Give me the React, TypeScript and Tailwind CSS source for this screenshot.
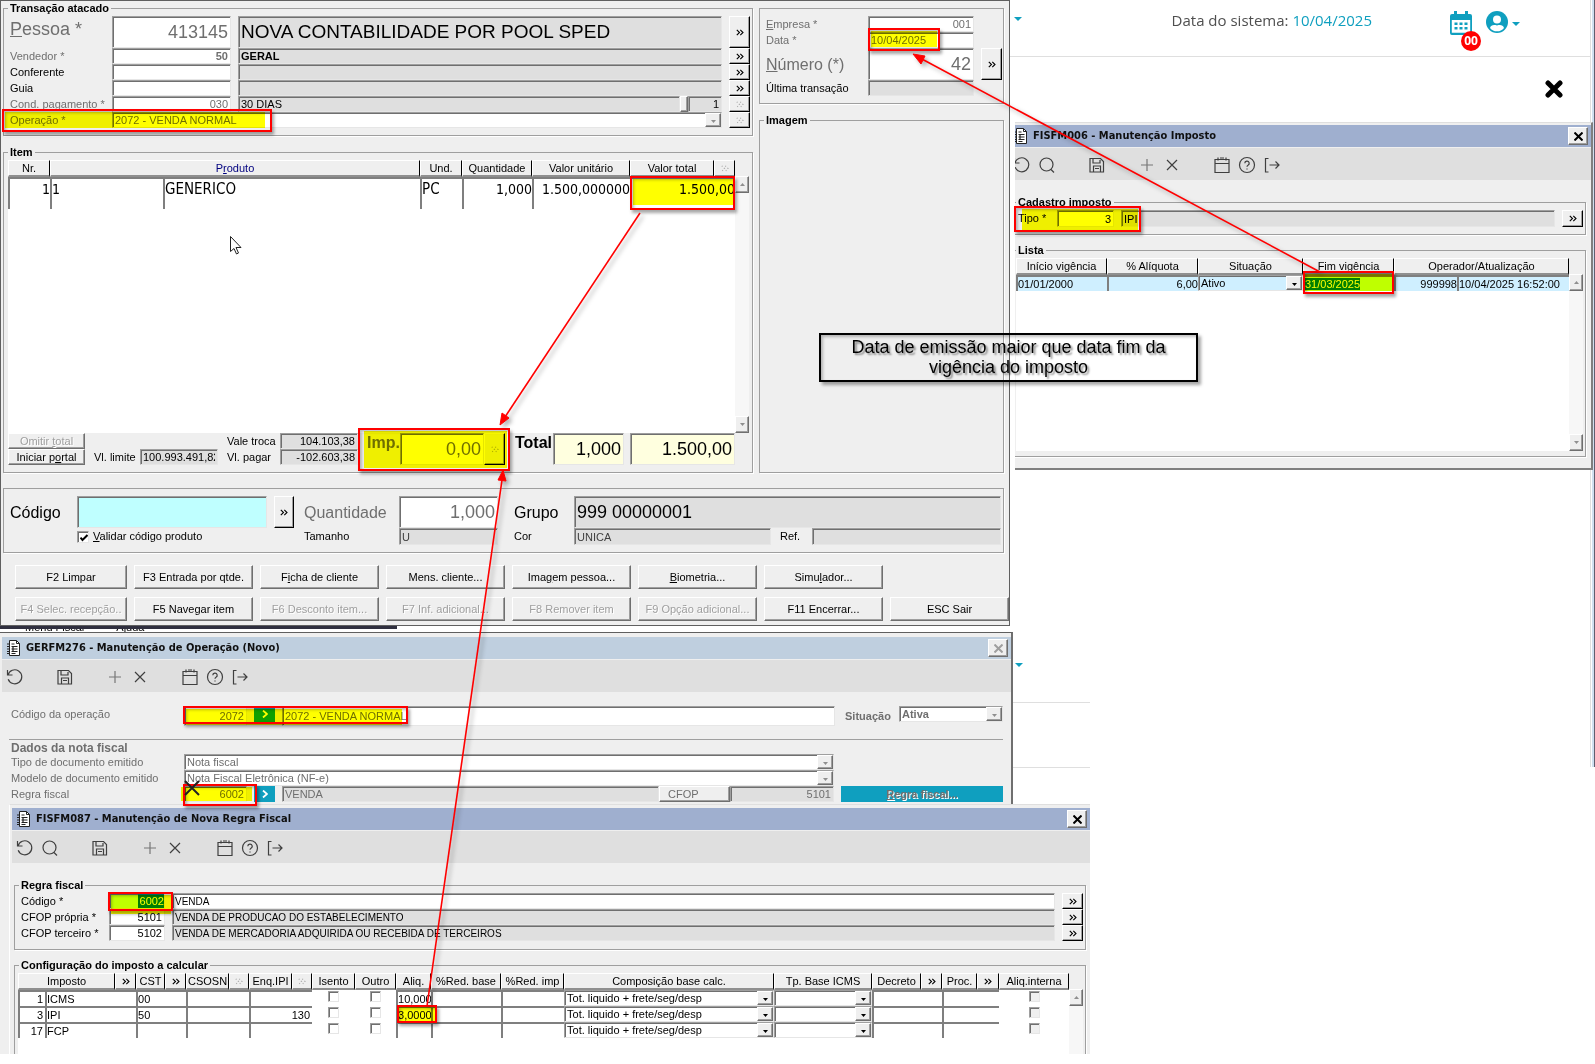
import { ReactNode } from "react";
import { clsx } from "clsx";

// Shared bevel styles
const raised = "bg-[#efefef] border-t border-l border-t-white border-l-white border-r border-b border-r-[#6f6f6f] border-b-[#6f6f6f] shadow-[inset_-1px_-1px_0_#9f9f9f]";
const raisedDark = "bg-[#efefef] border-t border-l border-t-white border-l-white border-r border-b border-r-black border-b-black shadow-[inset_-1px_-1px_0_#9f9f9f]";
const sunken = "border-t border-l border-t-[#9f9f9f] border-l-[#9f9f9f] border-r border-b border-r-[#e6e6e6] border-b-[#e6e6e6] shadow-[inset_1px_1px_0_#6f6f6f]";
const head = "h-4 p-0 pt-px text-center font-normal leading-[13px] whitespace-nowrap bg-[#efefef] border-t border-l border-t-white border-l-white border-r border-b-2 border-r-black border-b-[#8f8f8f]";
const cell = "p-0 border-t-2 border-l-2 border-[#7f7f7f] leading-3 whitespace-nowrap overflow-hidden";
const tahoma = "font-['DejaVu_Sans_Condensed','DejaVu_Sans',sans-serif]";

type FieldProps = { id?: string; label?: string; value?: string; className?: string };

const Field = ({ id, label, value = "", className }: FieldProps) => (
  <input
    id={id}
    aria-label={label}
    readOnly
    defaultValue={value}
    className={clsx("block h-full w-full min-w-0 px-0.5 outline-none", sunken, className)}
  />
);

const Chevrons = ({ off = false }) => (
  <svg viewBox="0 0 8 7" className="h-[7px] w-2" fill="none" stroke={off ? "#a8a8a8" : "#000"} strokeWidth="1.100" strokeDasharray={off ? "1 2" : undefined}>
    <path d="M.8.8l2.700 2.700L.8 6.200M4.300.8L7 3.500 4.300 6.200" />
  </svg>
);

const LookupButton = ({ off = false, label = "Pesquisar" }) => (
  <button type="button" aria-label={label} disabled={off} className={clsx("flex h-full w-full items-center justify-center", raisedDark)}>
    <Chevrons off={off} />
  </button>
);

const Combo = ({ id, label, value, off = false, className }: FieldProps & { off?: boolean }) => (
  <div className={clsx("flex h-4 min-w-0 items-center", sunken, className ?? "bg-white")}>
    <select id={id} aria-label={label} className="h-full min-w-0 flex-1 appearance-none bg-transparent pl-0.5 leading-3 outline-none">
      <option>{value}</option>
    </select>
    <span className={clsx("flex h-3.5 w-4 shrink-0 items-center justify-center", raised)}>
      <svg viewBox="0 0 5 3" className="mt-0.5 h-[3px] w-[5px]" fill={off ? "#8f8f8f" : "#000"}><path d="M0 0h5L2.5 3z" /></svg>
    </span>
  </div>
);

type GroupProps = { title: string; className?: string; inner?: string; children?: ReactNode };

const Group = ({ title, className, inner, children }: GroupProps) => (
  <fieldset className={clsx("m-0 min-w-0 border border-[#9f9f9f] p-0 shadow-[1px_1px_0_#fff]", className)}>
    <legend className="ml-1 h-4 px-0.5 leading-4 font-bold">{title}</legend>
    <div className={inner}>{children}</div>
  </fieldset>
);

const ScrollBar = ({ down = true }) => (
  <div className="flex w-3.5 shrink-0 flex-col justify-between bg-[#f7f7f7]">
    <span className={clsx("flex h-[17px] items-center justify-center", raised)}>
      <svg viewBox="0 0 5 3" className="h-[3px] w-[5px]" fill="#8f8f8f"><path d="M0 3h5L2.5 0z" /></svg>
    </span>
    {down && (
      <span className={clsx("flex h-[17px] items-center justify-center", raised)}>
        <svg viewBox="0 0 5 3" className="h-[3px] w-[5px]" fill="#8f8f8f"><path d="M0 0h5L2.5 3z" /></svg>
      </span>
    )}
  </div>
);

const DocIcon = () => (
  <svg viewBox="0 0 13 16" className="h-4 w-[13px] shrink-0" fill="none" stroke="#222">
    <path fill="#fff" d="M2.5.5h7l3 3v12h-10z" />
    <path d="M9.500.5v3h3M4.500 4h3M4.500 6.500h6M4.500 9h6M4.500 11.500h6M4.500 13.500h4" strokeWidth="1" />
    <path d="M0 4h2M0 6.500h2M0 9h2M0 11.500h2M0 13.500h2M6 6v6" strokeWidth="1.200" />
  </svg>
);

const toolIcons: Record<string, { label: string; light?: boolean; d: string }> = {
  undo: { label: "Desfazer", d: "M1.500 2v5h5M2 7a7 7 0 1 1 .2 4.200" },
  search: { label: "Pesquisar", d: "M15 8.500a6.500 6.500 0 1 1-13 0a6.500 6.500 0 1 1 13 0M13 13.500l3 3" },
  save: { label: "Salvar", d: "M2 2.500h10.500l3 3v10.500h-13.500zM5 2.500v4.500h7v-3M5.500 16v-6h7v6M7 12.500h4" },
  add: { label: "Incluir", light: true, d: "M9 3v12M3 9h12" },
  remove: { label: "Excluir", d: "M4 4l10 10M14 4l-10 10" },
  calendar: { label: "Calendário", d: "M2 3.500h14v13h-14zM2 7.500h14M5 1.500v3M13 1.500v3M7 2h4" },
  help: { label: "Ajuda", d: "M16.500 9a7.500 7.500 0 1 1-15 0a7.500 7.500 0 1 1 15 0M6.800 7.200a2.200 2.200 0 1 1 3.200 2c-.7.400-1 .8-1 1.600M9 12.500v1" },
  exit: { label: "Sair", d: "M5.500 2.500h-3v13.500h3M6.500 9h9.500M12.500 5.500l3.500 3.500-3.500 3.500" },
};

const Toolbar = ({ names, className }: { names: string[]; className?: string }) => (
  <div className={clsx("flex h-8 shrink-0 items-center bg-[#dfdfdf] pt-0.5", className)}>
    {names.map((name, i) => {
      const icon = toolIcons[name];
      if (!icon) return <span key={i} className="w-[25px]" />;
      return (
        <button key={i} type="button" aria-label={icon.label} className="flex w-[25px] justify-center">
          <svg viewBox="0 0 18 18" className="size-[18px]" fill="none" stroke={icon.light ? "#777" : "#3f3f3f"} strokeWidth="1.200">
            <path d={icon.d} />
          </svg>
        </button>
      );
    })}
  </div>
);

const TitleBar = ({ title, off = false, className }: { title: string; off?: boolean; className?: string }) => (
  <div className={clsx("mb-px flex h-[22px] shrink-0 items-center gap-1.5 pr-[3px]", className)}>
    <DocIcon />
    <h2 className={clsx("flex-1 text-[11px] font-bold text-[#101010]", tahoma)}>{title}</h2>
    <button type="button" aria-label="Fechar" className={clsx("flex h-[18px] w-5 items-center justify-center", raised)}>
      <svg viewBox="0 0 9 9" className="size-[9px]" stroke={off ? "#9f9f9f" : "#000"} strokeWidth="2"><path d="M.5.5l8 8M8.500.5l-8 8" /></svg>
    </button>
  </div>
);

/* ---------- Transação atacado ---------- */

const rowGrid = "grid h-4 grid-cols-[95px_119px_1fr_21px] gap-x-[7px]";

const people = [
  { id: "vendedor", label: "Vendedor *", code: "50", name: "GERAL", dim: true },
  { id: "conferente", label: "Conferente", code: "", name: "", dim: false },
  { id: "guia", label: "Guia", code: "", name: "", dim: false },
];

// "_" marks the accelerator letter that follows it
const Accel = ({ text }: { text: string }) => {
  const at = text.indexOf("_");
  if (at < 0) return <>{text}</>;
  return <>{text.slice(0, at)}<u>{text[at + 1]}</u>{text.slice(at + 2)}</>;
};

const actions = [
  ["F2 Limpar", "F3 Entrada por qtde.", "F_icha de cliente", "Mens. cliente...", "Ima_gem pessoa...", "_Biometria...", "Simu_lador..."],
  ["F4 Selec. recepção..", "F5 Navegar item", "F6 Desconto item...", "F7 Inf. adicional...", "F8 Remover item", "F9 Opção adicional...", "F11 Encerrar...", "ESC Sair"],
];
const disabledActions = ["F4", "F6", "F7", "F8", "F9"];

const Transacao = () => (
  <section className="absolute top-0 left-0 w-[1010px] border border-[#5f5f5f] bg-[#efefef] px-0.5 pb-1">
    <div className="-mt-px flex gap-1.5">
      <div className="flex min-w-0 flex-1 flex-col gap-2">
        <Group title="Transação atacado" inner="pr-0.5 pb-[7px] pl-1.5">
          <div className="grid h-8 grid-cols-[95px_119px_1fr_21px] gap-x-[7px]">
            <label htmlFor="pessoa" className="text-[18px] leading-[26px] text-[#6f6f6f]"><Accel text="_Pessoa *" /></label>
            <Field id="pessoa" value="413145" className="bg-white text-right text-[18px] text-[#6f6f6f]" />
            <Field label="Nome da pessoa" value="NOVA CONTABILIDADE POR POOL SPED" className="bg-[#dfdfdf] text-[19px]" />
            <LookupButton />
          </div>
          {people.map((p) => (
            <div key={p.id} className={rowGrid}>
              <label htmlFor={p.id} className={p.dim ? "leading-4 text-[#6f6f6f]" : "leading-4"}>{p.label}</label>
              <Field id={p.id} value={p.code} className="bg-white text-right font-bold text-[#6f6f6f]" />
              <Field label={p.label + " nome"} value={p.name} className="bg-[#dfdfdf] font-bold" />
              <LookupButton />
            </div>
          ))}
          <div className={rowGrid}>
            <label htmlFor="cond" className="leading-4 text-[#6f6f6f]">Cond. pagamento *</label>
            <Field id="cond" value="030" className="bg-white text-right text-[#6f6f6f]" />
            <div className="flex">
              <Field label="Condição" value="30 DIAS" className="flex-1 bg-[#dfdfdf]" />
              <span className={clsx("w-2 shrink-0", raised)} />
              <div className="w-[34px] shrink-0"><Field label="Parcelas" value="1" className="bg-[#dfdfdf] text-right" /></div>
            </div>
            <LookupButton off />
          </div>
          <div className={rowGrid}>
            <label htmlFor="operacao" className="leading-4 text-[#6f6f6f]">Operação *</label>
            <Combo id="operacao" value="2072 - VENDA NORMAL" off className="col-span-2 bg-white text-[#6f6f6f]" />
            <LookupButton off />
          </div>
        </Group>

        <Group title="Item" inner="pr-[3px] pb-[7px] pl-1">
          <div className="flex h-[273px]">
            <div className="min-w-0 flex-1 bg-white">
              <table className="w-full table-fixed border-separate border-spacing-0">
                <colgroup>
                  <col className="w-[42px]" />
                  <col className="w-[113px]" />
                  <col />
                  <col className="w-[42px]" />
                  <col className="w-[70px]" />
                  <col className="w-[98px]" />
                  <col className="w-[84px]" />
                  <col className="w-[21px]" />
                </colgroup>
                <thead>
                  <tr>
                    <th className={head}>Nr.</th>
                    <th colSpan={2} className={clsx(head, "bg-[#dfdfdf] text-[#00007f]")}><Accel text="P_roduto" /></th>
                    <th className={head}>Und.</th>
                    <th className={head}>Quantidade</th>
                    <th className={head}>Valor unitário</th>
                    <th className={head}>Valor total</th>
                    <th className={head} aria-label="Expandir"><span className="flex justify-center"><Chevrons off /></span></th>
                  </tr>
                </thead>
                <tbody>
                  <tr className={clsx("h-8 align-top text-[14px]", tahoma)}>
                    <td className={clsx(cell, "pt-1 text-right")}>1</td>
                    <td className={clsx(cell, "pt-1")}>1</td>
                    <td className={clsx(cell, "pt-1 text-[15px]")}>GENERICO</td>
                    <td className={clsx(cell, "pt-1 text-[15px]")}>PC</td>
                    <td className={clsx(cell, "pt-1 text-right")}>1,000</td>
                    <td className={clsx(cell, "pt-1 text-right")}>1.500,000000</td>
                    <td colSpan={2} className={clsx(cell, "pt-1 text-right")}>1.500,00</td>
                  </tr>
                </tbody>
              </table>
            </div>
            <div className="flex pt-4"><ScrollBar /></div>
          </div>
          <div className="flex h-8 pr-3.5">
            <div className="flex w-[77px] shrink-0 flex-col">
              <button type="button" disabled className={clsx("h-4 leading-3 text-[#9f9f9f] [text-shadow:1px_1px_0_#fff]", raised)}><Accel text="Omitir _total" /></button>
              <button type="button" className={clsx("h-4 leading-3", raised)}><Accel text="Iniciar p_ortal" /></button>
            </div>
            <div className="ml-[9px] grid h-4 grid-cols-[46px_78px] self-end">
              <label htmlFor="limite" className="leading-4">Vl. limite</label>
              <Field id="limite" value="100.993.491,82" className="bg-[#dfdfdf]" />
            </div>
            <div className="ml-[9px] grid grid-cols-[53px_78px] grid-rows-2">
              <label htmlFor="vale" className="leading-4">Vale troca</label>
              <Field id="vale" value="104.103,38" className="bg-[#dfdfdf] text-right" />
              <label htmlFor="pagar" className="leading-4">Vl. pagar</label>
              <Field id="pagar" value="-102.603,38" className="bg-[#dfdfdf] text-right" />
            </div>
            <label htmlFor="imp" className="ml-[9px] w-[33px] text-[16px] leading-5 font-bold text-[#6f6f6f]">Imp.</label>
            <div className="w-[84px]"><Field id="imp" value="0,00" className="bg-white text-right text-[18px] text-[#6f6f6f]" /></div>
            <div className="w-[21px]"><LookupButton off /></div>
            <label htmlFor="qtotal" className="ml-2.5 w-[38px] text-[16px] leading-5 font-bold">Total</label>
            <div className="w-[71px]"><Field id="qtotal" value="1,000" className="bg-[#ffffdf] text-right text-[18px]" /></div>
            <div className="ml-1.5 flex-1"><Field label="Valor total" value="1.500,00" className="bg-[#ffffdf] text-right text-[18px]" /></div>
          </div>
        </Group>
      </div>

      <div className="mr-[3px] flex w-[245px] shrink-0 flex-col gap-2 pt-2">
        <div className="grid grid-cols-[95px_106px_21px] gap-x-[7px] border border-[#9f9f9f] py-[7px] pl-1.5 shadow-[1px_1px_0_#fff] [grid-template-rows:16px_16px_32px_16px]">
          <label htmlFor="empresa" className="leading-4 text-[#6f6f6f]"><Accel text="_Empresa *" /></label>
          <Field id="empresa" value="001" className="bg-white text-right text-[#6f6f6f]" />
          <span />
          <label htmlFor="data" className="leading-4 text-[#6f6f6f]">Data *</label>
          <Field id="data" value="10/04/2025" className="bg-white text-[#6f6f6f]" />
          <span />
          <label htmlFor="numero" className="text-[16px] leading-[34px] text-[#6f6f6f]"><Accel text="_Número (*)" /></label>
          <Field id="numero" value="42" className="bg-white text-right text-[18px] text-[#6f6f6f]" />
          <LookupButton />
          <label htmlFor="ultima" className="leading-4">Última transação</label>
          <Field id="ultima" className="bg-[#dfdfdf]" />
        </div>
        <Group title="Imagem" className="flex-1" />
      </div>
    </div>

    <div className="mt-[15px] mr-[3px] grid grid-cols-[60px_190px_20px_91px_99px_62px_1fr] gap-x-[7px] border border-[#9f9f9f] py-[7px] pr-0.5 pl-1.5 shadow-[1px_1px_0_#fff] [grid-template-rows:32px_17px]">
      <label htmlFor="codigo" className="text-[16px] leading-[34px]">Código</label>
      <Field id="codigo" className="bg-[#bfffff]" />
      <LookupButton />
      <label htmlFor="qtd" className="pl-[3px] text-[16px] leading-[34px] text-[#6f6f6f]">Quantidade</label>
      <Field id="qtd" value="1,000" className="bg-white text-right text-[18px] text-[#6f6f6f]" />
      <label htmlFor="grupo" className="pl-[9px] text-[16px] leading-[34px]">Grupo</label>
      <Field id="grupo" value="999 00000001" className="bg-[#dfdfdf] text-[18px]" />
      <span />
      <label className="flex items-center gap-1">
        <span className={clsx("relative size-3 bg-white", sunken)}>
          <input type="checkbox" defaultChecked className="block size-full appearance-none" />
          <svg viewBox="0 0 8 8" className="pointer-events-none absolute inset-0.5 size-2" fill="none" stroke="#000" strokeWidth="2"><path d="M.5 3.500l2 2.500 5-5" /></svg>
        </span>
        <span><Accel text="_Validar código produto" /></span>
      </label>
      <span />
      <label htmlFor="tamanho" className="pl-[3px] leading-4">Tamanho</label>
      <Field id="tamanho" value="U" className="bg-[#dfdfdf] text-[#3f3f3f]" />
      <label htmlFor="cor" className="pl-[9px] leading-4">Cor</label>
      <div className="flex">
        <div className="w-[197px]"><Field id="cor" value="UNICA" className="bg-[#dfdfdf] text-[#3f3f3f]" /></div>
        <label htmlFor="ref" className="w-[41px] pl-[9px] leading-4">Ref.</label>
        <div className="flex-1"><Field id="ref" className="bg-[#dfdfdf]" /></div>
      </div>
    </div>

    <div className="mt-3 -mr-0.5 ml-3 grid grid-cols-[112px_repeat(7,1fr)] gap-x-[7px] gap-y-2">
      {actions.flat().map((text, i) => {
        const off = disabledActions.includes(text.slice(0, 2));
        return (
          <button
            key={text}
            type="button"
            disabled={off}
            className={clsx("h-6 min-w-0 whitespace-nowrap", raised, off && "text-[#9f9f9f] [text-shadow:1px_1px_0_#fff]", i === 7 && "col-start-1")}
          >
            <Accel text={text} />
          </button>
        );
      })}
    </div>
  </section>
);

/* ---------- GERFM276 ---------- */

const GoButton = () => (
  <button type="button" aria-label="Ir" className="flex h-4 w-[21px] shrink-0 items-center justify-center bg-[#0f9fbf]">
    <svg viewBox="0 0 6 8" className="h-2 w-1.5" fill="none" stroke="#fff" strokeWidth="1.800"><path d="M1 .5l4 3.500-4 3.500" /></svg>
  </button>
);

const Operacao = () => (
  <section className="absolute top-[632px] left-0 flex h-[422px] w-[1013px] flex-col border-t border-r-2 border-t-[#5f5f5f] border-r-[#6f6f6f] bg-[#efefef] pt-1 pl-0.5 text-[#6f6f6f]">
    <TitleBar title="GERFM276 - Manutenção de Operação (Novo)" off className="bg-[#bfcfdf] pl-[5px]" />
    <Toolbar names={["undo", "", "save", "", "add", "remove", "", "calendar", "help", "exit"]} />
    <div className="pr-2 pl-[9px]">
      <div className="mt-[14px] grid h-4 grid-cols-[166px_63px_21px_1fr_50px_104px] gap-x-[7px]">
        <label htmlFor="codop" className="leading-4">Código da operação</label>
        <Field id="codop" value="2072" className="bg-white text-right" />
        <GoButton />
        <Field label="Descrição da operação" value="2072 - VENDA NORMAL" className="bg-white" />
        <label htmlFor="situacao" className="pl-[3px] leading-5 font-bold">Situação</label>
        <Combo id="situacao" value="Ativa" off className="bg-white font-bold" />
      </div>
      <div className="mt-[17px] -ml-0.5 h-[15px] border-t border-[#9f9f9f] pl-0.5 text-[12px] leading-4 font-bold">Dados da nota fiscal</div>
      <div className="grid grid-cols-[166px_650px_1fr] gap-x-[7px]">
        <label htmlFor="tipodoc" className="leading-4">Tipo de documento emitido</label>
        <Combo id="tipodoc" value="Nota fiscal" off />
        <span />
        <label htmlFor="modelo" className="leading-4">Modelo de documento emitido</label>
        <Combo id="modelo" value="Nota Fiscal Eletrônica (NF-e)" off />
        <span />
        <label htmlFor="regra" className="leading-4">Regra fiscal</label>
        <div className="flex h-4 gap-[7px]">
          <Field id="regra" value="6002" className="max-w-[63px] shrink-0 bg-white text-right" />
          <GoButton />
          <div className="flex min-w-0 flex-1">
            <Field label="Descrição da regra" value="VENDA" className="flex-1 bg-[#dfdfdf]" />
            <button type="button" className={clsx("w-[71px] shrink-0 pl-2 text-left leading-3", raised)}>CFOP</button>
            <div className="w-[104px] shrink-0"><Field label="CFOP" value="5101" className="bg-[#dfdfdf] text-right" /></div>
          </div>
        </div>
        <button type="button" className="h-4 bg-[#0f9fbf] leading-4 font-bold [text-shadow:1px_1px_0_#fff]"><Accel text="_Regra fiscal..." /></button>
      </div>
    </div>
  </section>
);

/* ---------- FISFM087 ---------- */

const cfops = [
  { id: "cod-regra", label: "Código *", code: "6002", text: "VENDA", selected: true },
  { id: "cfop-propria", label: "CFOP própria *", code: "5101", text: "VENDA DE PRODUCAO DO ESTABELECIMENTO", selected: false },
  { id: "cfop-terceiro", label: "CFOP terceiro *", code: "5102", text: "VENDA DE MERCADORIA ADQUIRIDA OU RECEBIDA DE TERCEIROS", selected: false },
];

const taxes = [
  { nr: 1, name: "ICMS", cst: "00", enq: "", rate: "10,0000" },
  { nr: 3, name: "IPI", cst: "50", enq: "130", rate: "3,0000" },
  { nr: 17, name: "FCP", cst: "", enq: "", rate: "" },
];

const taxCols = [
  "w-[27px]", "w-[70px]", "w-[21px]", "w-[29px]", "w-[21px]", "w-[43px]", "w-[20px]", "w-[43px]", "w-[20px]", "w-[43px]", "w-[41px]",
  "w-[35px]", "w-[70px]", "w-[63px]", "", "w-[98px]", "w-[49px]", "w-[21px]", "w-[35px]", "w-[22px]", "w-[70px]",
];

const ChevronHead = ({ off = false }) => (
  <th className={head} aria-label="Pesquisar"><span className="flex justify-center"><Chevrons off={off} /></span></th>
);

const CheckCell = ({ label, className }: { label: string; className?: string }) => (
  <td className="p-0 align-top">
    <input type="checkbox" aria-label={label} className={clsx("mx-auto mt-px block size-[11px] appearance-none", sunken, className)} />
  </td>
);

const RegraFiscal = () => (
  <section className="absolute top-[804px] left-[9px] flex h-[250px] w-[1081px] flex-col overflow-hidden border-t border-l border-t-[#dfdfdf] border-l-white bg-[#efefef] pt-[3px] pl-0.5">
    <TitleBar title="FISFM087 - Manutenção de Nova Regra Fiscal" className="bg-[#9fafcf] pl-[5px]" />
    <Toolbar names={["undo", "search", "", "save", "", "add", "remove", "", "calendar", "help", "exit"]} />
    <div className="mt-[14px] flex flex-1 flex-col gap-[7px] pr-1 pl-0.5">
      <Group title="Regra fiscal" inner="pr-0.5 pb-2 pl-1.5">
        {cfops.map((row) => (
          <div key={row.id} className="grid h-4 grid-cols-[81px_56px_1fr_21px] gap-x-[7px]">
            <label htmlFor={row.id} className="leading-4">{row.label}</label>
            {row.selected ? (
              <div className={clsx("flex justify-end bg-[#bfffff]", sunken)}>
                <input id={row.id} readOnly defaultValue={row.code} className="h-full w-[26px] bg-[#007f7f] text-right text-white outline-none" />
              </div>
            ) : (
              <Field id={row.id} value={row.code} className="bg-white text-right" />
            )}
            <Field label={row.label + " descrição"} value={row.text} className={clsx("text-[10px]", row.selected ? "bg-white" : "bg-[#dfdfdf]")} />
            <LookupButton />
          </div>
        ))}
      </Group>
      <Group title="Configuração do imposto a calcular" className="flex-1 border-b-0" inner="pr-0.5 pl-[3px]">
        <div className="flex h-[84px]">
          <div className="min-w-0 flex-1 bg-white">
            <table className="w-full table-fixed border-separate border-spacing-0">
              <colgroup>{taxCols.map((w, i) => <col key={i} className={w} />)}</colgroup>
              <thead>
                <tr>
                  <th colSpan={2} className={head}>Imposto</th>
                  <ChevronHead />
                  <th className={head}>CST</th>
                  <ChevronHead />
                  <th className={head}>CSOSN</th>
                  <ChevronHead off />
                  <th className={head}>Enq.IPI</th>
                  <ChevronHead off />
                  <th className={head}>Isento</th>
                  <th className={head}>Outro</th>
                  <th className={head}>Aliq.</th>
                  <th className={head}>%Red. base</th>
                  <th className={head}>%Red. imp</th>
                  <th className={head}>Composição base calc.</th>
                  <th className={head}>Tp. Base ICMS</th>
                  <th className={head}>Decreto</th>
                  <ChevronHead />
                  <th className={head}>Proc.</th>
                  <ChevronHead />
                  <th className={head}>Aliq.interna</th>
                </tr>
              </thead>
              <tbody>
                {taxes.map((tax) => (
                  <tr key={tax.nr} className="h-4">
                    <td className={clsx(cell, "pr-0.5 text-right")}>{tax.nr}</td>
                    <td colSpan={2} className={cell}>{tax.name}</td>
                    <td colSpan={2} className={cell}>{tax.cst}</td>
                    <td colSpan={2} className={cell} />
                    <td colSpan={2} className={clsx(cell, "pr-0.5 text-right")}>{tax.enq}</td>
                    <CheckCell label={`${tax.name} isento`} />
                    <CheckCell label={`${tax.name} outro`} />
                    <td className={cell}>{tax.rate}</td>
                    <td className={cell} />
                    <td className={cell} />
                    <td className="p-0"><Combo label={`Composição ${tax.name}`} value="Tot. liquido + frete/seg/desp" /></td>
                    <td className="p-0"><Combo label={`Base ${tax.name}`} value="" /></td>
                    <td colSpan={2} className={cell} />
                    <td colSpan={2} className={cell} />
                    <CheckCell label={`${tax.name} alíquota interna`} className="bg-[#efefef]" />
                  </tr>
                ))}
              </tbody>
            </table>
          </div>
          <div className="flex pt-4"><ScrollBar down={false} /></div>
        </div>
      </Group>
    </div>
  </section>
);

/* ---------- FISFM006 ---------- */

const Imposto = () => (
  <section className="absolute top-[122px] left-[1015px] flex h-[348px] w-[578px] flex-col overflow-hidden border-t border-r-2 border-b-2 border-t-[#dfdfdf] border-r-[#7f7f7f] border-b-[#7f7f7f] bg-[#efefef] pt-0.5">
    <TitleBar title="FISFM006 - Manutenção Imposto" className="-ml-px bg-[#9fafcf]" />
    <Toolbar names={["undo", "search", "", "save", "", "add", "remove", "", "calendar", "help", "exit"]} className="-ml-1.5" />
    <div className="mt-[14px] flex flex-1 flex-col gap-[7px] pr-[5px] pb-[11px]">
      <Group title="Cadastro imposto" className="-ml-1" inner="pr-0.5 pb-[7px] pl-1.5">
        <div className="grid h-[17px] grid-cols-[32px_57px_1fr_21px] gap-x-[7px]">
          <label htmlFor="tipo" className="leading-4">Tipo *</label>
          <Field id="tipo" value="3" className="bg-white text-right" />
          <Field label="Tipo descrição" value="IPI" className="bg-[#dfdfdf]" />
          <LookupButton />
        </div>
      </Group>
      <Group title="Lista" className="-ml-1 flex-1" inner="pr-0.5 pl-1">
        <div className="flex h-[193px]">
          <div className="min-w-0 flex-1 bg-white">
            <table className="w-full table-fixed border-separate border-spacing-0">
              <colgroup>
                <col className="w-[91px]" />
                <col className="w-[91px]" />
                <col />
                <col className="w-[91px]" />
                <col className="w-[63px]" />
                <col className="w-[112px]" />
              </colgroup>
              <thead>
                <tr>
                  <th className={head}>Início vigência</th>
                  <th className={head}>% Alíquota</th>
                  <th className={head}>Situação</th>
                  <th className={head}>Fim vigência</th>
                  <th colSpan={2} className={head}>Operador/Atualização</th>
                </tr>
              </thead>
              <tbody>
                <tr className="h-4 bg-[#cfefff]">
                  <td className={cell}>01/01/2000</td>
                  <td className={clsx(cell, "text-right")}>6,00</td>
                  <td className="p-0"><Combo label="Situação" value="Ativo" className="bg-[#cfefff]" /></td>
                  <td className={clsx(cell, "bg-[#bfffff]")}><span className="bg-[#007f7f] text-white">31/03/2025</span></td>
                  <td className={clsx(cell, "text-right")}>999998</td>
                  <td className={cell}>10/04/2025 16:52:00</td>
                </tr>
              </tbody>
            </table>
          </div>
          <div className="flex pt-4"><ScrollBar /></div>
        </div>
      </Group>
    </div>
  </section>
);

/* ---------- Page behind the windows ---------- */

const Caret = ({ className }: { className?: string }) => (
  <svg viewBox="0 0 8 4" className={clsx("h-1 w-2", className)} fill="#0f9fbf"><path d="M0 0h8L4 4z" /></svg>
);

const Portal = () => (
  <div className="h-[767px] border-r border-[#5f5f6f]">
    <div className="h-full border-r-2 border-[#cfdfef]">
      <div className="mr-px flex h-full flex-col border-r border-[#dfdfdf]">
        <header className="flex h-[57px] items-start justify-end border-b border-[#dfdfdf]">
          <p className="mt-2 mr-[78px] font-['Open_Sans','Noto_Sans',sans-serif] text-[15px] leading-6 text-[#4f4f4f]">
            Data do sistema: <a href="#data" className="text-[#0f9fbf]">10/04/2025</a>
          </p>
          <button type="button" aria-label="Agenda" className="relative mt-[11px] mr-3.5 w-[22px]">
            <svg viewBox="0 0 22 24" className="h-6 w-[22px]" fill="#0f9fbf">
              <path fillRule="evenodd" d="M2 3h18a2 2 0 0 1 2 2v17a2 2 0 0 1-2 2H2a2 2 0 0 1-2-2V5a2 2 0 0 1 2-2zM1.800 9v12.700h18.400V9z" />
              <path d="M4 0h3v4H4zM15 0h3v4h-3zM4.500 11.500h3v2.500h-3zM9.500 11.500h3v2.500h-3zM14.500 11.500h3v2.500h-3zM4.500 16h3v2.500h-3zM9.500 16h3v2.500h-3zM14.500 16h3v2.500h-3z" />
            </svg>
            <span className="absolute top-5 left-[11px] flex size-5 items-center justify-center rounded-full bg-[#ff0000] font-['Open_Sans',sans-serif] text-[12px] font-bold text-white">00</span>
          </button>
          <button type="button" aria-label="Usuário" className="mt-[11px] mr-[70px] flex items-center gap-1">
            <svg viewBox="0 0 22 22" className="size-[22px]">
              <circle cx="11" cy="11" r="11" fill="#0f9fbf" />
              <circle cx="11" cy="8.500" r="4" fill="#fff" />
              <path d="M4 17c1-3 3.500-3.500 7-2.500 3.500-1 6-.5 7 2.500a9 9 0 0 1-14 0z" fill="#fff" />
            </svg>
            <Caret className="mt-1" />
          </button>
        </header>
        <div className="flex h-16 items-center justify-end">
          <button type="button" aria-label="Fechar" className="mr-[27px]">
            <svg viewBox="0 0 18 18" className="size-[18px]" stroke="#000" strokeWidth="5" strokeLinecap="round"><path d="M3 3l12 12M15 3L3 15" /></svg>
          </button>
        </div>
      </div>
    </div>
  </div>
);

/* ---------- Notes drawn over the windows ---------- */

const marks = [
  { box: "top-[109px] left-[2px] h-[23px] w-[270px]", fill: "top-[112px] left-[5px] h-[16px] w-[260px]" },
  { box: "top-[28px] left-[868px] h-[23px] w-[72px]", fill: "top-[31px] left-[871px] h-[16px] w-[66px]" },
  { box: "top-[176px] left-[630px] h-[34px] w-[105px]", fill: "top-[179px] left-[633px] h-[26px] w-[100px]" },
  { box: "top-[428px] left-[358px] h-[43px] w-[152px]", fill: "top-[431px] left-[364px] h-[37px] w-[143px]" },
  { box: "top-[706px] left-[183px] h-[18px] w-[225px]", fill: "top-[709px] left-[186px] h-[16px] w-[216px]" },
  { box: "top-[784px] left-[183px] h-[22px] w-[74px]", fill: "top-[787px] left-[181px] h-[14px] w-[71px]" },
  { box: "top-[892px] left-[108px] h-[19px] w-[65px]", fill: "top-[895px] left-[111px] h-[19px] w-[60px]" },
  { box: "top-[1005px] left-[397px] h-[18px] w-[40px]", fill: "top-[1007px] left-[399px] h-[16px] w-[37px]" },
  { box: "top-[206px] left-[1014px] h-[26px] w-[127px]", fill: "top-[209px] left-[1022px] h-[22px] w-[116px]" },
  { box: "top-[271px] left-[1303px] h-[23px] w-[91px]", fill: "top-[274px] left-[1304px] h-[17px] w-[89px]" },
];

const Notes = () => (
  <>
    {marks.map((m) => (
      <div key={m.fill} className={clsx("pointer-events-none absolute bg-[#ffff00] mix-blend-multiply", m.fill)} />
    ))}
    {marks.map((m) => (
      <div key={m.box} className={clsx("pointer-events-none absolute border-2 border-[#ff0000] shadow-[2px_3px_3px_rgba(0,0,0,0.35),inset_2px_2px_3px_rgba(0,0,0,0.25)]", m.box)} />
    ))}
    <svg className="pointer-events-none absolute top-0 left-0 h-[1064px] w-[1595px] drop-shadow-[3px_3px_2px_rgba(0,0,0,0.3)]" viewBox="0 0 1595 1064" fill="#ff0000" stroke="#ff0000">
      <path d="M640 213L505 417" strokeWidth="1.600" />
      <path d="M500 425l2-12 7 5z" />
      <path d="M1320 272L920 58" strokeWidth="1.600" />
      <path d="M913 54l12 2-4 8z" />
      <path d="M427 1006L502 480" strokeWidth="1.600" />
      <path d="M503 470l3 11-8-1z" />
    </svg>
    <svg className="pointer-events-none absolute top-[235px] left-[229px] h-5 w-[13px]" viewBox="0 0 13 20" fill="#fff" stroke="#222">
      <path d="M1.500 1.500v15l3.500-3 2.500 5.500 2-1-2.500-5.500h5z" />
    </svg>
    <svg className="pointer-events-none absolute top-[780px] left-[184px] size-4" viewBox="0 0 16 16" stroke="#222" strokeWidth="2">
      <path d="M1 1l14 14M15 1L1 15" />
    </svg>
    <p className="absolute top-[333px] left-[819px] h-[49px] w-[379px] border-2 border-black px-4 pt-0.5 text-center text-[18px] leading-5 shadow-[3px_3px_3px_rgba(0,0,0,0.35),inset_2px_2px_3px_rgba(0,0,0,0.25)] [text-shadow:2px_2px_2px_rgba(0,0,0,0.45)]">
      Data de emissão maior que data fim da vigência do imposto
    </p>
  </>
);

const App = () => (
  <main className="relative min-h-screen overflow-hidden bg-white font-['Liberation_Sans',Arial,sans-serif] text-[11px] text-black">
    <Portal />
    {/* Slivers of the page and menu between windows */}
    <div className="absolute top-[626px] left-0 w-[397px] border-t-[3px] border-[#2f2f3f]">
      <div className="flex h-[3px] items-end gap-8 overflow-hidden pl-[25px] leading-[10px]"><span>Menu Fiscal</span><span>Ajuda</span></div>
    </div>
    <Caret className="absolute top-[17px] left-[1014px]" />
    <Caret className="absolute top-[663px] left-[1015px]" />
    <div className="absolute top-[702px] left-[1013px] h-[66px] w-[77px] border-y border-[#dfdfdf]" />
    <Transacao />
    <Operacao />
    <RegraFiscal />
    <Imposto />
    <Notes />
  </main>
);

export default App;
